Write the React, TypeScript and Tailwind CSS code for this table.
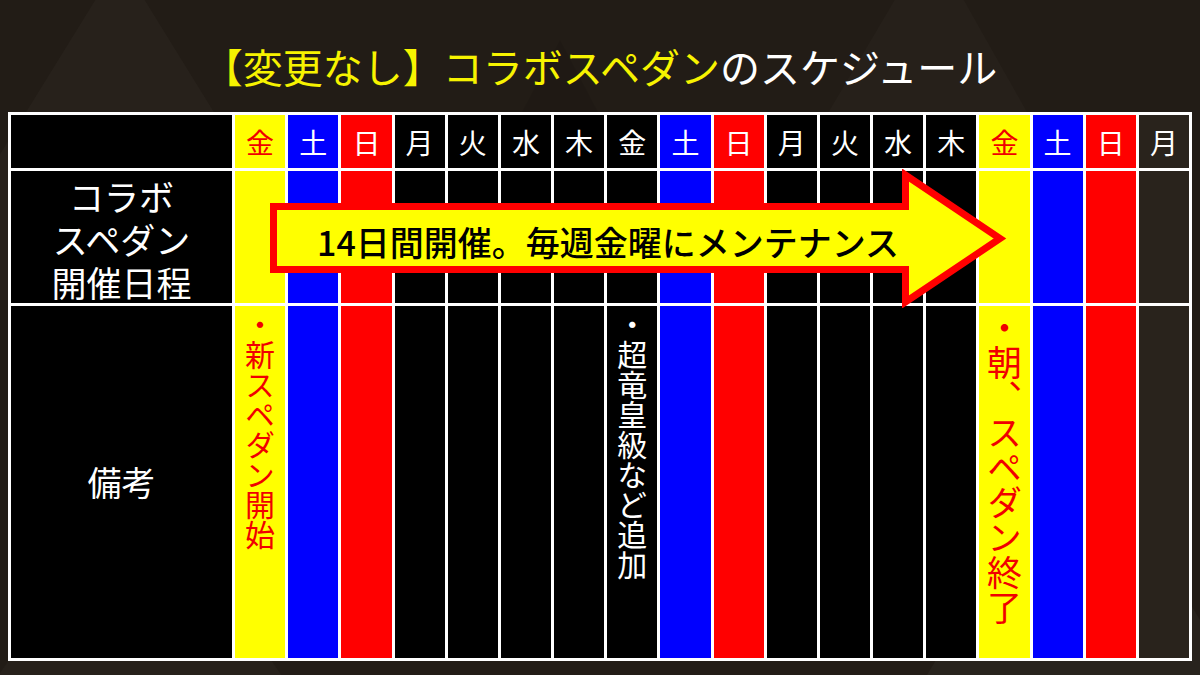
// Collab event schedule board (14-day banner over a weekday grid)

const days = ['金', '土', '日', '月', '火', '水', '木', '金', '土', '日', '月', '火', '水', '木', '金', '土', '日', '月'];

const cellBg = (i: number) => {
  if (i === 17) return 'bg-[#29231c]';
  if (i === 0 || i === 14) return 'bg-[#ffff00]';
  if (days[i] === '土') return 'bg-[#0000ff]';
  if (days[i] === '日') return 'bg-[#ff0000]';
  return 'bg-black';
};

const notes: Record<number, { text: string; cls: string }> = {
  0: { text: '・新スペダン開始', cls: 'text-[30px] text-[#f00000]' },
  7: { text: '・超竜皇級など追加', cls: 'text-[30px] text-white' },
  14: { text: '・朝、スペダン終了', cls: 'text-[35px] text-[#f00000]' },
};

const Backdrop = () => (
  <svg className="absolute inset-0" width="1200" height="675" viewBox="0 0 1200 675">
    <polygon points="120,-40 330,300 -90,300" fill="#ffffff" opacity="0.025" />
    <polygon points="930,-60 1150,330 700,330" fill="#ffffff" opacity="0.02" />
    <polygon points="560,40 760,420 360,420" fill="#000000" opacity="0.08" />
    <polygon points="1080,420 1260,720 900,720" fill="#ffffff" opacity="0.03" />
    <polygon points="140,470 340,760 -60,760" fill="#ffffff" opacity="0.025" />
  </svg>
);

const Arrow = () => (
  <div className="absolute left-[262px] top-[57px] h-[139px] w-[737px]">
    <svg width="737" height="139" viewBox="0 0 737 139" className="absolute inset-0">
      <polygon
        points="3.5,37.5 635.5,37.5 635.5,6 730,69.5 635.5,133 635.5,100.5 3.5,100.5"
        fill="#ffff00"
        stroke="#ff0000"
        strokeWidth="7"
        strokeLinejoin="miter"
        strokeMiterlimit="10"
      />
    </svg>
    <div className="absolute inset-0 flex items-center pl-[47px] pt-[7px]">
      <span className="text-[34px] font-medium leading-none text-black">14日間開催。毎週金曜にメンテナンス</span>
    </div>
  </div>
);

export default function App() {
  return (
    <div className="relative h-[675px] w-[1200px] overflow-hidden bg-[#221c16] font-['Noto_Sans_CJK_JP','Noto_Sans',sans-serif]">
      <Backdrop />
      <div className="relative flex flex-col">
        <h1 className="pt-[46px] text-center text-[40px] font-normal leading-[40px] text-white">
          <span className="text-[#f7f300]">【変更なし】コラボスペダン</span>のスケジュール
        </h1>

        <div className="relative mx-[8px] mt-[26px] grid grid-cols-[221px_repeat(18,1fr)] grid-rows-[53px_132px_352px] gap-[3px] bg-white p-[3px] text-white">
          {/* header row */}
          <div className="bg-black" />
          {days.map((d, i) => (
            <div
              key={'h' + i}
              className={`flex items-center justify-center text-[28px] leading-none ${cellBg(i)} ${
                i === 0 || i === 14 ? 'text-[#f00000]' : 'text-white'
              }`}
            >
              {d}
            </div>
          ))}

          {/* schedule row */}
          <div className="flex flex-col items-center justify-center bg-black pt-[2px] text-center text-[35px] leading-[43px]">
            <span>コラボ</span>
            <span>スペダン</span>
            <span>開催日程</span>
          </div>
          {days.map((_, i) => (
            <div key={'s' + i} className={cellBg(i)} />
          ))}

          {/* notes row */}
          <div className="flex items-center justify-center bg-black text-[34px] leading-none">備考</div>
          {days.map((_, i) => (
            <div key={'n' + i} className={`flex justify-center pt-[4px] ${cellBg(i)}`}>
              {notes[i] && (
                <span className={`leading-none [writing-mode:vertical-rl] ${notes[i].cls}`}>{notes[i].text}</span>
              )}
            </div>
          ))}

          <Arrow />
        </div>
      </div>
    </div>
  );
}
